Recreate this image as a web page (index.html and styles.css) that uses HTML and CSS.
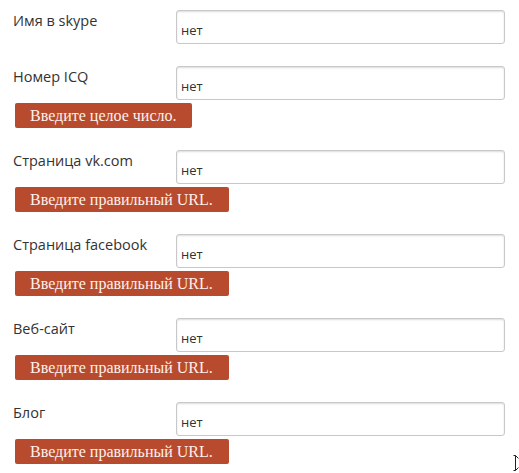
FILE: index.html
```html
<!DOCTYPE html>
<html lang="ru">
<head>
<meta charset="utf-8">
<link rel="stylesheet" href="styles.css">
</head>
<body>
<form class="form">
  <div class="field">
    <div class="row">
      <label class="label">Имя в skype</label>
      <input class="input" type="text" value="нет">
    </div>
  </div>
  <div class="field">
    <div class="row">
      <label class="label">Номер ICQ</label>
      <input class="input" type="text" value="нет">
    </div>
    <div class="error">Введите целое число.</div>
  </div>
  <div class="field">
    <div class="row">
      <label class="label">Страница vk.com</label>
      <input class="input" type="text" value="нет">
    </div>
    <div class="error">Введите правильный URL.</div>
  </div>
  <div class="field">
    <div class="row">
      <label class="label">Страница facebook</label>
      <input class="input" type="text" value="нет">
    </div>
    <div class="error">Введите правильный URL.</div>
  </div>
  <div class="field">
    <div class="row">
      <label class="label">Веб-сайт</label>
      <input class="input" type="text" value="нет">
    </div>
    <div class="error">Введите правильный URL.</div>
  </div>
  <div class="field">
    <div class="row">
      <label class="label">Блог</label>
      <input class="input" type="text" value="нет">
    </div>
    <div class="error">Введите правильный URL.</div>
  </div>
</form>
<svg class="cursor" width="6" height="16" viewBox="0 0 6 16">
  <path d="M0.5 0.5 L2.5 0.5 L2.5 15.5 L0.5 15.5 M2.5 0.5 L5.5 3.5 M2.5 15.5 L5.5 12.5" fill="none" stroke="#222" stroke-width="1"/>
</svg>
</body>
</html>
```
FILE: styles.css
```css
html, body {
  margin: 0;
  padding: 0;
  background: #ffffff;
}
body {
  position: relative;
  min-height: 473px;
}
.form {
  padding: 10px 0 0 0;
  display: flex;
  flex-direction: column;
  gap: 22px;
  font-family: "Open Sans", "DejaVu Sans", sans-serif;
}
.field {
  display: flex;
  flex-direction: column;
  gap: 3px;
}
.row {
  display: flex;
  align-items: flex-start;
}
.label {
  width: 163px;
  padding-left: 13px;
  padding-top: 1px;
  font-size: 14.5px;
  line-height: 20px;
  color: #333333;
}
.input {
  box-sizing: border-box;
  width: 329px;
  height: 34px;
  margin: 0;
  padding: 6px 4px 0 4px;
  border: 1px solid #c8c8c8;
  border-radius: 3px;
  box-shadow: inset 0 1px 2px rgba(0, 0, 0, 0.14);
  font-family: "Open Sans", "DejaVu Sans", sans-serif;
  font-size: 13px;
  color: #333333;
  background: #ffffff;
  outline: none;
}
.error {
  align-self: flex-start;
  margin-left: 15px;
  height: 25px;
  padding: 0 16px 0 15px;
  background: #b84b2e;
  border-radius: 2px;
  color: #fdf1ec;
  font-family: "Liberation Serif", "Times New Roman", serif;
  font-size: 16px;
  line-height: 25px;
}
.cursor {
  position: absolute;
  left: 513px;
  top: 455px;
}
```
